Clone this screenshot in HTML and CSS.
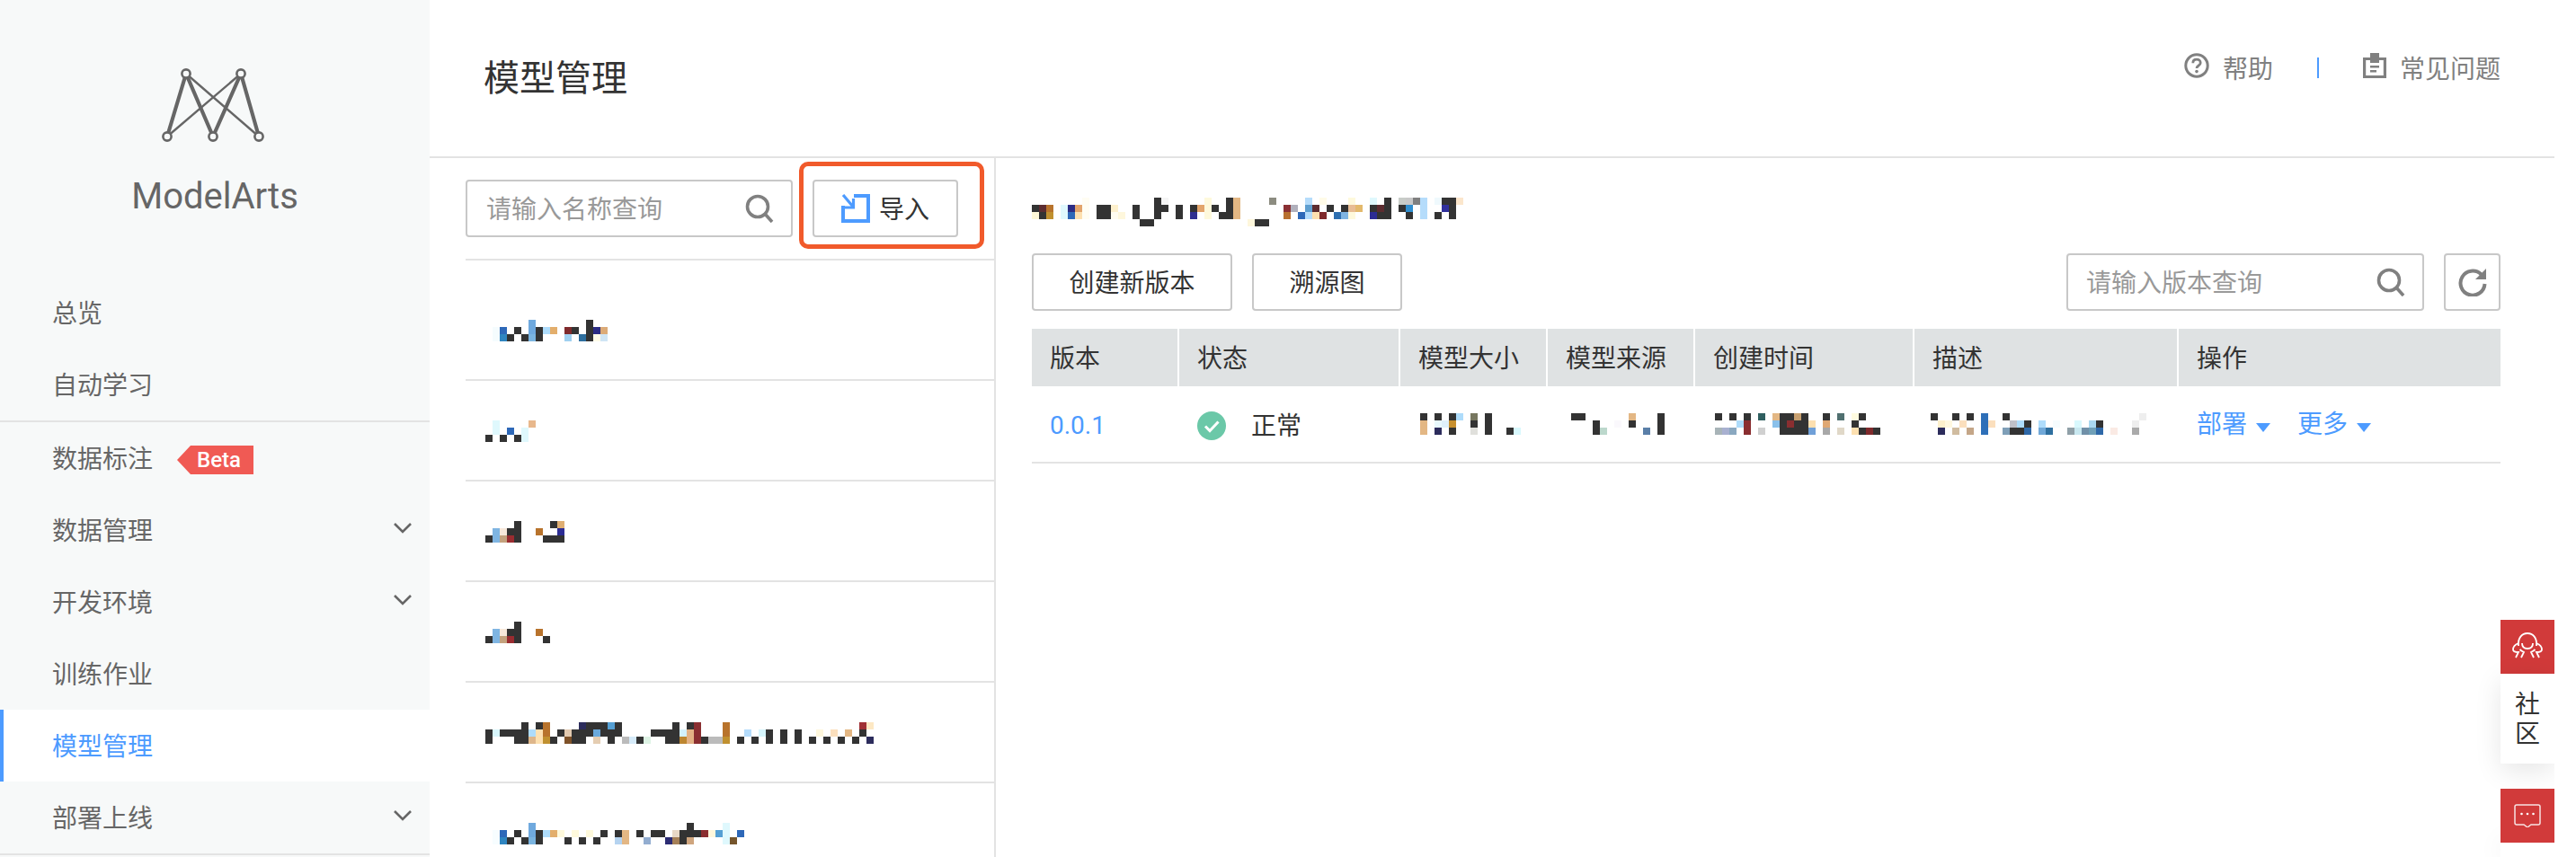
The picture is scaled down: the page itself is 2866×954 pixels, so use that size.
FILE: index.html
```html
<!DOCTYPE html>
<html lang="zh-CN">
<head>
<meta charset="utf-8">
<title>ModelArts 模型管理</title>
<link rel="stylesheet" href="styles.css">
</head>
<body>
<div class="app">
  <aside class="sidebar">
    <div class="brand">
      <svg class="logo" width="120" height="90" viewBox="179 70 120 90" fill="none" stroke="#666">
        <path stroke-width="4.200" d="M207 82 186 152M207 82l30 70M268 82l-31 70M268 82l20 70"/>
        <path stroke-width="2.400" d="M207 82l81 70M268 82l-82 70"/>
        <g fill="#f7f9f9" stroke-width="2.600">
          <circle cx="207" cy="82" r="4.600"/><circle cx="268" cy="82" r="4.600"/>
          <circle cx="186" cy="152" r="4.600"/><circle cx="237" cy="152" r="4.600"/><circle cx="288" cy="152" r="4.600"/>
        </g>
      </svg>
      <div class="brand-name">ModelArts</div>
    </div>
    <nav class="menu">
      <div class="menu-group">
        <a class="menu-item">总览</a>
        <a class="menu-item">自动学习</a>
      </div>
      <div class="menu-group">
        <a class="menu-item">数据标注<span class="beta">Beta</span></a>
        <a class="menu-item">数据管理<svg class="chev" width="20" height="12" viewBox="0 0 20 12"><path d="M1 1l9 9 9-9"/></svg></a>
        <a class="menu-item">开发环境<svg class="chev" width="20" height="12" viewBox="0 0 20 12"><path d="M1 1l9 9 9-9"/></svg></a>
        <a class="menu-item">训练作业</a>
        <a class="menu-item active">模型管理</a>
        <a class="menu-item">部署上线<svg class="chev" width="20" height="12" viewBox="0 0 20 12"><path d="M1 1l9 9 9-9"/></svg></a>
      </div>
    </nav>
  </aside>

  <main class="content">
    <header class="topbar">
      <h1 class="page-title">模型管理</h1>
      <div class="top-links">
        <a class="top-link">
          <svg width="28" height="28" viewBox="0 0 28 28"><circle cx="14" cy="14" r="12.200" fill="none" stroke="#808080" stroke-width="3"/><path d="M9.800 11.200c0-2.600 1.900-4 4.200-4s4.200 1.400 4.200 3.700c0 3.200-4.200 3-4.200 6" fill="none" stroke="#808080" stroke-width="2.800"/><circle cx="14" cy="20.600" r="1.800" fill="#808080"/></svg>
          <span class="top-text">帮助</span>
        </a>
        <span class="top-sep"></span>
        <a class="top-link">
          <svg width="26" height="28" viewBox="0 0 26 28"><path fill="#808080" d="M0 5h8V0h10v5h8v23H0zM3.200 8v17h19.600V8h-4.800v3H8V8z"/><path fill="#808080" d="M8 14h10v2.400H8zM8 19h7v2.400H8z"/></svg>
          <span class="top-text">常见问题</span>
        </a>
      </div>
    </header>

    <div class="workspace">
      <section class="models">
        <div class="toolbar">
          <div class="search search-models">
            <span class="placeholder">请输入名称查询</span>
            <svg class="search-ic" width="32" height="32" viewBox="0 0 32 32"><circle cx="14" cy="14" r="11.500" fill="none" stroke="#808080" stroke-width="3.600"/><path d="M22 22l8 9" stroke="#808080" stroke-width="3.600"/></svg>
          </div>
          <button class="btn btn-import">
            <svg width="32" height="32" viewBox="0 0 32 32" fill="none" stroke="#4d9bff" stroke-width="4"><path d="M14 2h16v28H2V13"/><path d="M2 1l11 13" stroke-width="3.200"/><path d="M13.500 5v10H4" stroke-width="3.200"/></svg>
            <span class="label">导入</span>
          </button>
          <div class="annotation"></div>
        </div>
        <ul class="model-list">
          <li class="model-row first">
            <svg class="mz" width="192" height="24" viewBox="0 0 24 3">
              <rect x="1" y="1" fill="#f5fcfe"/><rect x="1" y="2" fill="#f5fcfe"/><rect x="2" y="1" fill="#2e68b8"/><rect x="2" y="2" fill="#2f85c0"/><rect class="d" x="3" y="2"/><rect class="d" x="4" y="1"/><rect class="d" x="5" y="2"/><rect x="6" y="0" fill="#6fa9de"/><rect x="6" y="1" fill="#6fa9de"/><rect x="6" y="2" fill="#7ab4e0"/><rect class="d" x="7" y="1"/><rect class="d" x="7" y="2"/><rect x="8" y="1" fill="#aedcfb"/><rect x="9" y="1" fill="#e3ae6c"/>
              <rect x="11" y="1" fill="#7f2a2c"/><rect x="11" y="2" fill="#9fd0f0"/><rect class="d" x="12" y="1"/><rect x="13" y="2" fill="#2e6f9f"/><rect class="d" x="14" y="0"/><rect class="d" x="14" y="1"/><rect class="d" x="14" y="2"/><rect x="15" y="1" fill="#2c2c84"/><rect x="15" y="2" fill="#fffbe8"/><rect x="16" y="1" fill="#dcab78"/><rect x="16" y="2" fill="#cfe5f5"/>
            </svg>
          </li>
          <li class="model-row">
            <svg class="mz" width="192" height="24" viewBox="0 0 24 3">
              <rect class="d" x="0" y="2"/><rect x="1" y="0" fill="#dff8fd"/><rect x="1" y="1" fill="#dff8fd"/><rect class="d" x="2" y="2"/><rect x="3" y="1" fill="#2e68b8"/><rect class="d" x="4" y="2"/><rect x="5" y="1" fill="#dff8fd"/><rect x="5" y="2" fill="#dff8fd"/><rect x="6" y="0" fill="#e8b88c"/>
            </svg>
          </li>
          <li class="model-row">
            <svg class="mz" width="192" height="24" viewBox="0 0 24 3">
              <rect class="d" x="0" y="2"/><rect x="1" y="1" fill="#7fb5e2"/><rect x="1" y="2" fill="#7fb5e2"/><rect x="2" y="1" fill="#f7e8da"/><rect x="2" y="2" fill="#c4a27e"/><rect class="d" x="3" y="1"/><rect x="3" y="2" fill="#9a2c30"/><rect class="d" x="4" y="0"/><rect class="d" x="4" y="1"/><rect class="d" x="4" y="2"/><rect x="7" y="1" fill="#b8732c"/><rect class="d" x="8" y="2"/><rect class="d" x="9" y="0"/><rect class="d" x="9" y="2"/><rect x="10" y="0" fill="#dfae72"/><rect x="10" y="1" fill="#2c2c94"/><rect class="d" x="10" y="2"/>
            </svg>
          </li>
          <li class="model-row">
            <svg class="mz" width="192" height="24" viewBox="0 0 24 3">
              <rect class="d" x="0" y="2"/><rect x="1" y="1" fill="#7fb5e2"/><rect x="1" y="2" fill="#7fb5e2"/><rect x="2" y="1" fill="#f7e8da"/><rect x="2" y="2" fill="#c4a27e"/><rect class="d" x="3" y="1"/><rect x="3" y="2" fill="#9a2c30"/><rect class="d" x="4" y="0"/><rect class="d" x="4" y="1"/><rect class="d" x="4" y="2"/><rect x="7" y="1" fill="#b8732c"/><rect class="d" x="8" y="2"/>
            </svg>
          </li>
          <li class="model-row">
            <svg class="mz" width="432" height="24" viewBox="0 0 54 3">
              <rect class="d" x="0" y="1"/><rect class="d" x="0" y="2"/><rect x="1" y="1" fill="#d8f6fc"/><rect class="d" x="2" y="1"/><rect class="d" x="3" y="1"/><rect class="d" x="4" y="1"/><rect class="d" x="4" y="2"/><rect class="d" x="5" y="0"/><rect class="d" x="5" y="1"/><rect class="d" x="5" y="2"/><rect x="6" y="1" fill="#aedcfb"/><rect x="6" y="2" fill="#deb68a"/><rect class="d" x="7" y="0"/><rect x="7" y="1" fill="#fde0b0"/><rect x="7" y="2" fill="#fde0b0"/><rect x="8" y="0" fill="#b8732c"/><rect x="8" y="1" fill="#b8732c"/><rect x="8" y="2" fill="#c0902f"/><rect class="d" x="9" y="2"/><rect class="d" x="10" y="1"/><rect x="11" y="1" fill="#e2c9b0"/><rect x="11" y="2" fill="#7f5229"/><rect class="d" x="12" y="1"/><rect class="d" x="12" y="2"/><rect x="13" y="0" fill="#2c2c5c"/><rect class="d" x="13" y="1"/><rect class="d" x="13" y="2"/><rect class="d" x="14" y="0"/><rect class="d" x="14" y="1"/><rect class="d" x="15" y="0"/><rect x="15" y="1" fill="#6aa9dc"/><rect x="15" y="2" fill="#e5cdb2"/><rect class="d" x="16" y="0"/><rect class="d" x="16" y="1"/><rect x="17" y="0" fill="#559fd3"/><rect class="d" x="17" y="1"/><rect class="d" x="17" y="2"/><rect class="d" x="18" y="0"/><rect class="d" x="18" y="1"/><rect x="19" y="2" fill="#bbb"/><rect x="20" y="2" fill="#d5eaf9"/><rect class="d" x="21" y="2"/><rect x="22" y="2" fill="#def3e5"/>
              <rect class="d" x="23" y="1"/><rect class="d" x="24" y="1"/><rect class="d" x="25" y="1"/><rect class="d" x="25" y="2"/><rect class="d" x="26" y="0"/><rect class="d" x="26" y="1"/><rect class="d" x="26" y="2"/><rect x="27" y="1" fill="#d3f1fb"/><rect x="27" y="2" fill="#bd8630"/><rect class="d" x="28" y="0"/><rect x="28" y="1" fill="#e3b184"/><rect x="28" y="2" fill="#e3b184"/><rect x="29" y="0" fill="#8a2e30"/><rect x="29" y="1" fill="#8a2e30"/><rect x="29" y="2" fill="#8a2e30"/><rect class="d" x="30" y="2"/><rect x="31" y="2" fill="#bbb"/><rect x="32" y="2" fill="#bbb"/><rect x="33" y="0" fill="#b8732c"/><rect x="33" y="1" fill="#b8732c"/><rect x="33" y="2" fill="#c0902f"/><rect class="d" x="35" y="2"/><rect x="36" y="1" fill="#b5dcfb"/><rect class="d" x="37" y="2"/><rect x="38" y="1" fill="#d6f5fc"/><rect class="d" x="39" y="1"/><rect class="d" x="39" y="2"/><rect class="d" x="41" y="1"/><rect class="d" x="41" y="2"/><rect class="d" x="43" y="1"/><rect class="d" x="43" y="2"/><rect class="d" x="45" y="2"/><rect x="46" y="1" fill="#fef7dd"/><rect class="d" x="47" y="2"/><rect x="48" y="1" fill="#fbdfbd"/><rect class="d" x="49" y="2"/><rect x="50" y="1" fill="#e3b784"/><rect class="d" x="51" y="2"/><rect x="52" y="0" fill="#a03035"/><rect class="d" x="52" y="1"/><rect x="53" y="0" fill="#fde8c4"/><rect x="53" y="2" fill="#2c2c5c"/>
            </svg>
          </li>
          <li class="model-row">
            <svg class="mz" width="288" height="24" viewBox="0 0 36 3">
              <rect x="1" y="1" fill="#f7fdff"/><rect x="1" y="2" fill="#f7fdff"/><rect x="2" y="1" fill="#2e68b8"/><rect x="2" y="2" fill="#2f85c0"/><rect class="d" x="3" y="2"/><rect class="d" x="4" y="1"/><rect class="d" x="5" y="2"/><rect x="6" y="0" fill="#6fa9de"/><rect x="6" y="1" fill="#6fa9de"/><rect x="6" y="2" fill="#7ab4e0"/><rect class="d" x="7" y="1"/><rect class="d" x="7" y="2"/><rect x="8" y="1" fill="#aedcfb"/><rect x="9" y="1" fill="#e3ae6c"/><rect x="10" y="1" fill="#fef9dc"/><rect class="d" x="11" y="2"/><rect x="12" y="1" fill="#fef9dc"/><rect class="d" x="13" y="2"/><rect x="14" y="1" fill="#fef9dc"/><rect class="d" x="15" y="2"/><rect class="d" x="16" y="1"/><rect class="d" x="18" y="1"/><rect x="18" y="2" fill="#b5d3f0"/><rect x="19" y="1" fill="#e3b784"/><rect x="19" y="2" fill="#e3b784"/><rect class="d" x="21" y="1"/><rect x="22" y="2" fill="#93add0"/><rect class="d" x="23" y="1"/><rect class="d" x="24" y="1"/><rect x="25" y="2" fill="#2c2c74"/><rect x="26" y="1" fill="#e8d8c6"/><rect x="26" y="2" fill="#a58058"/><rect class="d" x="27" y="1"/><rect class="d" x="27" y="2"/><rect class="d" x="28" y="0"/><rect class="d" x="28" y="1"/><rect x="28" y="2" fill="#cfa57e"/><rect class="d" x="29" y="1"/><rect x="30" y="1" fill="#8a2e30"/><rect x="31" y="1" fill="#fef7dc"/><rect x="32" y="1" fill="#559fd3"/><rect x="33" y="0" fill="#dff8fd"/><rect x="33" y="1" fill="#dff8fd"/><rect x="33" y="2" fill="#dff8fd"/><rect x="34" y="2" fill="#75552c"/><rect x="35" y="1" fill="#2e68b8"/>
            </svg>
          </li>
        </ul>
      </section>

      <section class="detail">
        <svg class="mz" width="480" height="32" viewBox="0 0 60 4">
          <rect class="d" x="0" y="1"/><rect x="0" y="2" fill="#fff8d8"/><rect x="1" y="1" fill="#5c2c30"/><rect class="d" x="1" y="2"/><rect x="2" y="1" fill="#b8732c"/><rect x="2" y="2" fill="#c0902f"/><rect x="4" y="1" fill="#dff8fd"/><rect x="4" y="2" fill="#dff8fd"/><rect x="5" y="1" fill="#2c2c84"/><rect x="5" y="2" fill="#2e68b8"/><rect x="6" y="1" fill="#e3a56c"/><rect x="6" y="2" fill="#fde0b0"/><rect x="7" y="0" fill="#fffdf3"/><rect x="7" y="1" fill="#fffdf3"/><rect x="7" y="2" fill="#fffdf3"/><rect class="d" x="9" y="1"/><rect class="d" x="9" y="2"/><rect class="d" x="10" y="1"/><rect class="d" x="10" y="2"/><rect x="11" y="1" fill="#fdf0cc"/><rect x="11" y="2" fill="#fffcf0"/><rect x="12" y="2" fill="#fef7dc"/>
          <rect class="d" x="14" y="1"/><rect class="d" x="14" y="2"/><rect class="d" x="15" y="3"/><rect class="d" x="16" y="3"/><rect class="d" x="17" y="0"/><rect class="d" x="17" y="1"/><rect class="d" x="17" y="2"/><rect x="18" y="0" fill="#f5f5f5"/><rect class="d" x="18" y="1"/><rect class="d" x="20" y="1"/><rect class="d" x="20" y="2"/><rect class="d" x="22" y="1"/><rect x="22" y="2" fill="#303090"/><rect x="23" y="1" fill="#e3a56c"/><rect x="24" y="0" fill="#fef9dc"/><rect x="24" y="1" fill="#fef9dc"/><rect x="24" y="2" fill="#fef9dc"/><rect class="d" x="25" y="1"/><rect class="d" x="26" y="2"/><rect class="d" x="27" y="0"/><rect class="d" x="27" y="1"/><rect class="d" x="27" y="2"/><rect x="28" y="0" fill="#e3b784"/><rect x="28" y="1" fill="#e3b784"/><rect x="28" y="2" fill="#e3b784"/><rect x="30" y="3" fill="#fef7dc"/><rect class="d" x="31" y="3"/><rect class="d" x="32" y="3"/><rect x="33" y="0" fill="#8c8c80"/>
          <rect x="35" y="1" fill="#8a3034"/><rect x="35" y="2" fill="#b8702f"/><rect x="36" y="1" fill="#b0b0bc"/><rect x="37" y="2" fill="#2e68b8"/><rect x="38" y="0" fill="#b5dcfb"/><rect x="38" y="1" fill="#5f9fd0"/><rect x="38" y="2" fill="#b5dcfb"/><rect x="39" y="1" fill="#5c2c30"/><rect x="39" y="2" fill="#fde0b0"/><rect x="40" y="0" fill="#fffbe8"/><rect x="40" y="2" fill="#7f2a2c"/><rect class="d" x="41" y="1"/><rect x="42" y="2" fill="#2e6fb0"/><rect class="d" x="43" y="1"/><rect x="43" y="2" fill="#7fb5e2"/><rect x="44" y="0" fill="#fef9dc"/><rect x="44" y="1" fill="#e8bc94"/><rect x="44" y="2" fill="#fef9dc"/><rect x="45" y="1" fill="#e3b96c"/><rect x="47" y="0" fill="#dff8fd"/><rect class="d" x="47" y="1"/><rect x="47" y="2" fill="#2c2c94"/><rect x="48" y="1" fill="#5c2c30"/><rect class="d" x="48" y="2"/><rect class="d" x="49" y="0"/><rect class="d" x="49" y="1"/><rect class="d" x="49" y="2"/><rect x="51" y="0" fill="#c8ccc8"/><rect class="d" x="51" y="1"/><rect x="52" y="0" fill="#c8c8c8"/><rect x="52" y="1" fill="#2f8fd0"/><rect class="d" x="52" y="2"/><rect x="53" y="0" fill="#7f7f7f"/><rect x="54" y="0" fill="#b5dcfb"/><rect x="54" y="1" fill="#b5dcfb"/><rect x="54" y="2" fill="#b5dcfb"/><rect x="56" y="0" fill="#eff9fd"/><rect class="d" x="56" y="2"/><rect class="d" x="57" y="0"/><rect x="57" y="1" fill="#30309c"/><rect class="d" x="58" y="0"/><rect class="d" x="58" y="1"/><rect class="d" x="58" y="2"/><rect x="59" y="0" fill="#fbe6cc"/>
        </svg>

        <div class="actions">
          <button class="btn btn-new"><span class="label">创建新版本</span></button>
          <button class="btn btn-trace"><span class="label">溯源图</span></button>
          <div class="actions-right">
            <div class="search search-version">
              <span class="placeholder">请输入版本查询</span>
              <svg class="search-ic" width="32" height="32" viewBox="0 0 32 32"><circle cx="14" cy="14" r="11.500" fill="none" stroke="#808080" stroke-width="3.600"/><path d="M22 22l8 9" stroke="#808080" stroke-width="3.600"/></svg>
            </div>
            <button class="btn btn-refresh">
              <svg width="32" height="32" viewBox="0 0 32 32"><path d="M25.500 7.500A13.500 13.500 0 1 0 29.500 18" fill="none" stroke="#808080" stroke-width="4"/><path d="M31 1v12H19z" fill="#808080"/></svg>
            </button>
          </div>
        </div>

        <div class="table">
          <div class="th">版本</div>
          <div class="th">状态</div>
          <div class="th">模型大小</div>
          <div class="th">模型来源</div>
          <div class="th">创建时间</div>
          <div class="th">描述</div>
          <div class="th">操作</div>

          <div class="td link">0.0.1</div>
          <div class="td status">
            <svg width="32" height="32" viewBox="0 0 32 32"><circle cx="16" cy="16" r="16" fill="#6bc8a8"/><path d="M9 16.500l5 5 9.500-10" fill="none" stroke="#fff" stroke-width="3"/></svg>
            <span>正常</span>
          </div>
          <div class="td">
            <svg class="mz m-size" width="112" height="24" viewBox="0 0 14 3">
              <rect class="d" x="0" y="0"/><rect x="0" y="1" fill="#e3b784"/><rect x="0" y="2" fill="#e3b784"/><rect class="d" x="2" y="0"/><rect x="2" y="1" fill="#e8f8fd"/><rect x="2" y="2" fill="#2c2c5c"/><rect x="3" y="1" fill="#dff0fa"/><rect class="d" x="4" y="0"/><rect x="4" y="1" fill="#c8902f"/><rect class="d" x="4" y="2"/><rect x="5" y="0" fill="#aedcfb"/><rect x="7" y="0" fill="#77775f"/><rect class="d" x="7" y="1"/><rect x="7" y="2" fill="#e0e0dc"/><rect class="d" x="9" y="0"/><rect class="d" x="9" y="1"/><rect class="d" x="9" y="2"/><rect class="d" x="12" y="2"/><rect x="13" y="2" fill="#d8f8fd"/>
            </svg>
          </div>
          <div class="td">
            <svg class="mz m-source" width="104" height="24" viewBox="0 0 13 3">
              <rect class="d" x="0" y="0"/><rect class="d" x="1" y="0"/><rect class="d" x="3" y="1"/><rect class="d" x="3" y="2"/><rect x="4" y="2" fill="#bcd8cc"/><rect x="6" y="1" fill="#faf8fc"/><rect x="8" y="0" fill="#e3b784"/><rect class="d" x="8" y="1"/><rect x="10" y="2" fill="#5a7fa8"/><rect class="d" x="12" y="0"/><rect class="d" x="12" y="1"/><rect class="d" x="12" y="2"/>
            </svg>
          </div>
          <div class="td">
            <svg class="mz m-time" width="184" height="24" viewBox="0 0 23 3">
              <rect class="d" x="0" y="0"/><rect x="0" y="2" fill="#a8b4b8"/><rect x="1" y="2" fill="#a8b0d0"/><rect class="d" x="2" y="0"/><rect x="2" y="2" fill="#8aa8c0"/><rect x="3" y="1" fill="#aedcfb"/><rect class="d" x="4" y="0"/><rect x="4" y="1" fill="#8a2e30"/><rect x="4" y="2" fill="#8a2e30"/><rect x="6" y="0" fill="#2f5f60"/><rect x="6" y="2" fill="#d0d0d0"/><rect x="8" y="0" fill="#e3b784"/><rect x="8" y="1" fill="#8ac0ea"/><rect class="d" x="9" y="0"/><rect class="d" x="9" y="1"/><rect class="d" x="9" y="2"/><rect class="d" x="10" y="0"/><rect x="10" y="1" fill="#8a2e30"/><rect class="d" x="10" y="2"/><rect x="11" y="0" fill="#c8a070"/><rect class="d" x="11" y="1"/><rect class="d" x="11" y="2"/><rect class="d" x="12" y="0"/><rect class="d" x="12" y="1"/><rect class="d" x="12" y="2"/><rect x="13" y="1" fill="#fde0b0"/><rect x="13" y="2" fill="#70a0d8"/><rect class="d" x="15" y="0"/><rect x="15" y="1" fill="#dfa874"/><rect x="15" y="2" fill="#a8a8a8"/><rect x="17" y="0" fill="#507070"/><rect x="17" y="2" fill="#e0d8c8"/><rect x="19" y="0" fill="#fffbe0"/><rect class="d" x="19" y="1"/><rect x="19" y="2" fill="#fde0b0"/><rect class="d" x="20" y="0"/><rect class="d" x="20" y="2"/><rect x="21" y="2" fill="#7f2a2c"/><rect class="d" x="22" y="2"/>
            </svg>
          </div>
          <div class="td">
            <svg class="mz m-desc" width="240" height="24" viewBox="0 0 30 3">
              <rect class="d" x="0" y="0"/><rect x="1" y="1" fill="#fdf0cc"/><rect x="1" y="2" fill="#2c2c5c"/><rect x="2" y="1" fill="#fff8e0"/><rect class="d" x="3" y="0"/><rect x="3" y="2" fill="#d0bca0"/><rect x="4" y="1" fill="#fbdfbd"/><rect class="d" x="5" y="0"/><rect x="5" y="2" fill="#c4a688"/><rect x="7" y="0" fill="#2e6fb8"/><rect x="7" y="1" fill="#2e6fb8"/><rect x="7" y="2" fill="#2e6fb8"/><rect x="8" y="1" fill="#fbdfbd"/><rect class="d" x="10" y="0"/><rect x="10" y="2" fill="#7f9fb8"/><rect x="11" y="1" fill="#c0c0c8"/><rect class="d" x="11" y="2"/><rect x="12" y="1" fill="#aedcfb"/><rect class="d" x="12" y="2"/><rect class="d" x="13" y="1"/><rect x="13" y="2" fill="#2e68a8"/><rect x="15" y="1" fill="#aedcfb"/><rect x="15" y="2" fill="#70a8d8"/><rect x="16" y="2" fill="#2e6f9f"/><rect x="17" y="1" fill="#f5fcfe"/><rect x="19" y="2" fill="#90a0a8"/><rect x="20" y="1" fill="#d8f8fd"/><rect x="20" y="2" fill="#c8e8f0"/><rect x="21" y="2" fill="#7090a8"/><rect x="22" y="1" fill="#aad8f0"/><rect x="22" y="2" fill="#70a0b8"/><rect class="d" x="23" y="1"/><rect x="23" y="2" fill="#2e68a8"/><rect x="25" y="2" fill="#faeae4"/><rect x="28" y="1" fill="#eee"/><rect x="28" y="2" fill="#aaa"/><rect x="29" y="0" fill="#eee"/>
            </svg>
          </div>
          <div class="td ops">
            <a class="op">部署<i class="caret"></i></a>
            <a class="op">更多<i class="caret"></i></a>
          </div>
        </div>
      </section>
    </div>

    <aside class="float-tools">
      <div class="float-ic">
        <svg width="34" height="32" viewBox="0 0 34 32" fill="none" stroke="#fff" stroke-width="1.800"><path d="M7 15C6 6 11 1 17 1s11 5 10 14"/><path d="M11 12c0 4 2.500 6 6 6s6-2 6-6"/><path d="M7 12c-3.500 1.500-6 4-6 7 0 2 2.500 3 6 3l-3 6M27 12c3.500 1.500 6 4 6 7 0 2-2.500 3-6 3l3 6"/><path d="M8.500 19c1.500 1.500 4.500 3 4.500 3l-3 6M25.500 19c-1.500 1.500-4.500 3-4.500 3l3 6"/></svg>
      </div>
      <div class="float-label">社<br>区</div>
      <div class="float-ic float-msg">
        <svg width="30" height="26" viewBox="0 0 30 26" fill="none"><path d="M3 1h24a2 2 0 0 1 2 2v18a2 2 0 0 1-2 2H19l-4 3-4-3H3a2 2 0 0 1-2-2V3a2 2 0 0 1 2-2z" stroke="#fff" stroke-opacity=".85" stroke-width="1.500"/><g fill="#fff"><circle cx="8.500" cy="11" r="1.300"/><circle cx="15" cy="11" r="1.300"/><circle cx="21.500" cy="11" r="1.300"/></g></svg>
      </div>
      <div class="float-rest"></div>
    </aside>
  </main>
</div>
</body>
</html>
```

FILE: styles.css
```css
* { box-sizing: border-box; }

html, body {
  margin: 0;
  height: 954px;
  overflow: hidden;
  background: #fff;
}

body {
  font-family: Roboto, "Noto Sans CJK SC", sans-serif;
  font-size: 28px;
  color: #333;
}

.app {
  display: flex;
  height: 954px;
  overflow: hidden;
}

/* sidebar */
.sidebar {
  flex: none;
  width: 478px;
  background: #f7f9f9;
  color: #666;
}

.brand {
  height: 308px;
  padding-top: 70px;
}

.logo {
  display: block;
  margin: 0 auto;
}

.brand-name {
  margin-top: 35px;
  font-size: 40px;
  line-height: 48px;
  text-align: center;
}

.menu-group {
  border-bottom: 2px solid #e3e3e3;
}

.menu-item {
  position: relative;
  display: flex;
  align-items: center;
  height: 80px;
  padding: 4px 0 0 58px;
  line-height: 1;
}

.menu-item.active {
  background: #fff;
  color: #4d9bff;
  border-left: 4px solid #4d9bff;
  padding-left: 54px;
}

.chev {
  position: absolute;
  right: 20px;
  top: 32px;
  fill: none;
  stroke: #666;
  stroke-width: 2.600;
}

.beta {
  display: flex;
  align-items: center;
  height: 32px;
  width: 85px;
  margin-left: 27px;
  padding-left: 22px;
  background: #f05a54;
  clip-path: polygon(15px 0, 100% 0, 100% 100%, 15px 100%, 0 50%);
  color: #fff;
  font-size: 24px;
  font-weight: 500;
}

/* main: the page itself stops 24px short of the window's right edge */
.content {
  position: relative;
  flex: none;
  width: 2364px;
  height: 954px;
  overflow: hidden;
}

.topbar {
  display: flex;
  justify-content: space-between;
  height: 176px;
  padding: 58px 60px 0;
  border-bottom: 2px solid #e3e3e3;
}

.page-title {
  margin: 2px 0 0;
  font-size: 40px;
  font-weight: 400;
  line-height: 56px;
}

.top-links {
  display: flex;
  align-items: center;
  height: 30px;
  color: #808080;
  line-height: 30px;
}

.top-link {
  display: flex;
  align-items: center;
  gap: 15px;
}

.top-text {
  padding-top: 9px;
}

.top-sep {
  width: 2px;
  height: 23px;
  margin: 5px 49px 0;
  background: #4d9bff;
}

.workspace {
  display: flex;
  height: 778px;
}

/* model list */
.models {
  flex: none;
  width: 630px;
  padding-left: 40px;
  border-right: 2px solid #e3e3e3;
}

.toolbar {
  position: relative;
  display: flex;
  gap: 22px;
  padding: 24px 0;
}

.search {
  display: flex;
  align-items: center;
  justify-content: space-between;
  height: 64px;
  border: 2px solid #c8c8c8;
  border-radius: 4px;
  background: #fff;
}

.search-models {
  width: 364px;
  padding: 0 19px 0 21px;
}

.search-version {
  width: 398px;
  padding: 0 19px 0 20px;
}

.placeholder {
  padding-top: 4px;
  color: #999;
  line-height: 1;
}

.btn {
  display: flex;
  align-items: center;
  justify-content: center;
  height: 64px;
  padding: 0;
  border: 2px solid #c8c8c8;
  border-radius: 4px;
  background: #fff;
  color: #333;
  font: inherit;
  line-height: 1;
}

.label {
  padding-top: 4px;
}

.btn-import {
  width: 162px;
  gap: 10px;
}

.annotation {
  position: absolute;
  left: 371px;
  top: 4px;
  width: 206px;
  height: 97px;
  border: 5px solid #f15a2b;
  border-radius: 10px;
}

.model-list {
  margin: 0;
  padding: 0;
  list-style: none;
}

.model-row {
  height: 112px;
  padding: 44px 0 0 22px;
  border-top: 2px solid #e3e3e3;
}

.model-row.first {
  height: 134px;
  padding-top: 66px;
}

.mz {
  display: block;
  shape-rendering: crispEdges;
}

.mz rect {
  width: 1px;
  height: 1px;
}

.mz .d {
  fill: #333;
}

/* version detail */
.detail {
  flex: 1;
  min-width: 0;
  padding: 44px 60px 0 40px;
}

.actions {
  display: flex;
  gap: 22px;
  margin-top: 30px;
}

.btn-new { width: 223px; }
.btn-trace { width: 167px; }

.actions-right {
  display: flex;
  gap: 22px;
  margin-left: auto;
}

.btn-refresh { width: 63px; }

.table {
  display: grid;
  grid-template-columns: 162px 244px 162px 162px 242px 292px 358px;
  column-gap: 2px;
  margin-top: 20px;
  border-bottom: 2px solid #e3e3e3;
}

.th {
  display: flex;
  align-items: center;
  height: 64px;
  padding: 4px 0 0 20px;
  background: #dfe2e3;
  line-height: 1;
}

.td {
  display: flex;
  align-items: center;
  height: 84px;
  padding-left: 20px;
  line-height: 1;
}

.link {
  padding-top: 4px;
  color: #4d9bff;
}

.status {
  gap: 28px;
  padding-top: 4px;
}

.status span { padding-top: 2px; }

.m-size { margin: 0 0 0 2px; }
.m-source { margin: 0 0 0 6px; }
.m-time { margin: 0 0 0 2px; }
.m-desc { margin: 0 0 0 -2px; }

.ops {
  gap: 30px;
  color: #4d9bff;
}

.op {
  display: flex;
  align-items: center;
  gap: 10px;
  padding-top: 2px;
}

.caret {
  width: 16px;
  height: 10px;
  margin-top: 6px;
  background: #4d9bff;
  clip-path: polygon(0 0, 100% 0, 50% 100%);
}

/* floating tools */
.float-tools {
  position: absolute;
  right: 0;
  top: 690px;
  width: 60px;
  height: 264px;
}

.float-ic {
  display: flex;
  align-items: center;
  justify-content: center;
  height: 60px;
  background: #d13a3a;
}

.float-label {
  height: 100px;
  padding-top: 18px;
  background: #fff;
  line-height: 33px;
  text-align: center;
  box-shadow: 0 8px 30px rgba(0, 0, 0, .1);
}

.float-msg {
  position: relative;
  margin-top: 28px;
}

.float-rest {
  height: 16px;
  background: #fff;
  box-shadow: 0 0 30px rgba(0, 0, 0, .08);
}
```
